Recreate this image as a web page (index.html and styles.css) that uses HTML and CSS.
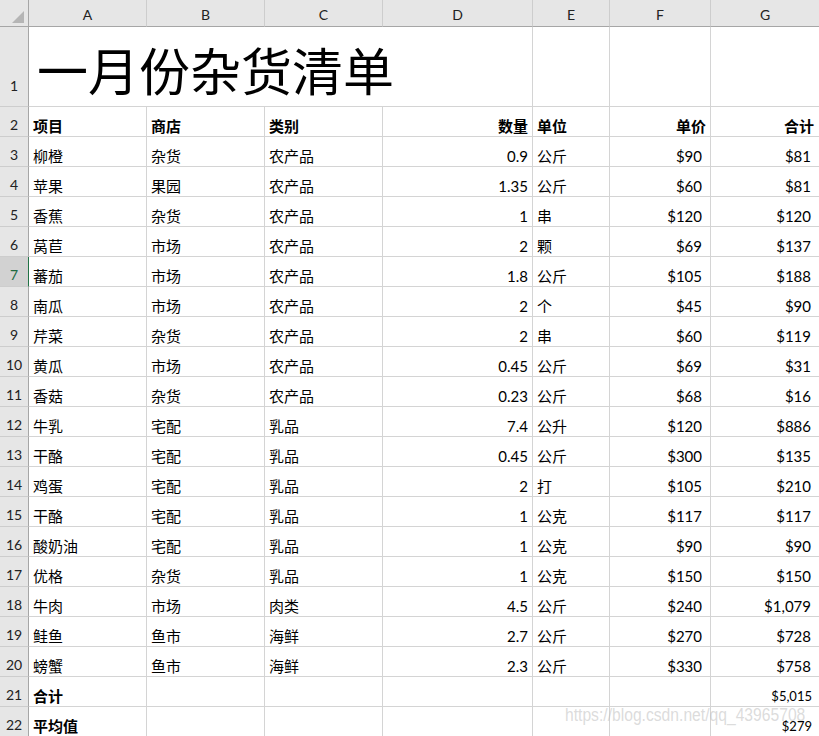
FILE: index.html
```html
<!DOCTYPE html>
<html lang="zh">
<head>
<meta charset="utf-8">
<title>一月份杂货清单</title>
<link rel="stylesheet" href="styles.css">
</head>
<body>
<div class="sheet">
  <div class="corner"><span class="tri"></span></div>
  <div class="colhead">A</div><div class="colhead">B</div><div class="colhead">C</div><div class="colhead">D</div><div class="colhead">E</div><div class="colhead">F</div><div class="colhead last">G</div>

  <div class="rowhead tall">1</div>
  <div class="c title">一月份杂货清单</div><div class="c"></div><div class="c"></div><div class="c last"></div>

  <div class="rowhead">2</div>
  <div class="c b">项目</div><div class="c b">商店</div><div class="c b">类别</div><div class="c b r">数量</div><div class="c b">单位</div><div class="c b r">单价</div><div class="c b r g last">合计</div>

  <div class="rowhead">3</div>
  <div class="c">柳橙</div><div class="c">杂货</div><div class="c">农产品</div><div class="c r">0.9</div><div class="c">公斤</div><div class="c r cur">$90</div><div class="c r cur last">$81</div>

  <div class="rowhead">4</div>
  <div class="c">苹果</div><div class="c">果园</div><div class="c">农产品</div><div class="c r">1.35</div><div class="c">公斤</div><div class="c r cur">$60</div><div class="c r cur last">$81</div>

  <div class="rowhead">5</div>
  <div class="c">香蕉</div><div class="c">杂货</div><div class="c">农产品</div><div class="c r">1</div><div class="c">串</div><div class="c r cur">$120</div><div class="c r cur last">$120</div>

  <div class="rowhead">6</div>
  <div class="c">莴苣</div><div class="c">市场</div><div class="c">农产品</div><div class="c r">2</div><div class="c">颗</div><div class="c r cur">$69</div><div class="c r cur last">$137</div>

  <div class="rowhead sel">7</div>
  <div class="c">蕃茄</div><div class="c">市场</div><div class="c">农产品</div><div class="c r">1.8</div><div class="c">公斤</div><div class="c r cur">$105</div><div class="c r cur last">$188</div>

  <div class="rowhead">8</div>
  <div class="c">南瓜</div><div class="c">市场</div><div class="c">农产品</div><div class="c r">2</div><div class="c">个</div><div class="c r cur">$45</div><div class="c r cur last">$90</div>

  <div class="rowhead">9</div>
  <div class="c">芹菜</div><div class="c">杂货</div><div class="c">农产品</div><div class="c r">2</div><div class="c">串</div><div class="c r cur">$60</div><div class="c r cur last">$119</div>

  <div class="rowhead">10</div>
  <div class="c">黄瓜</div><div class="c">市场</div><div class="c">农产品</div><div class="c r">0.45</div><div class="c">公斤</div><div class="c r cur">$69</div><div class="c r cur last">$31</div>

  <div class="rowhead">11</div>
  <div class="c">香菇</div><div class="c">杂货</div><div class="c">农产品</div><div class="c r">0.23</div><div class="c">公斤</div><div class="c r cur">$68</div><div class="c r cur last">$16</div>

  <div class="rowhead">12</div>
  <div class="c">牛乳</div><div class="c">宅配</div><div class="c">乳品</div><div class="c r">7.4</div><div class="c">公升</div><div class="c r cur">$120</div><div class="c r cur last">$886</div>

  <div class="rowhead">13</div>
  <div class="c">干酪</div><div class="c">宅配</div><div class="c">乳品</div><div class="c r">0.45</div><div class="c">公斤</div><div class="c r cur">$300</div><div class="c r cur last">$135</div>

  <div class="rowhead">14</div>
  <div class="c">鸡蛋</div><div class="c">宅配</div><div class="c">乳品</div><div class="c r">2</div><div class="c">打</div><div class="c r cur">$105</div><div class="c r cur last">$210</div>

  <div class="rowhead">15</div>
  <div class="c">干酪</div><div class="c">宅配</div><div class="c">乳品</div><div class="c r">1</div><div class="c">公克</div><div class="c r cur">$117</div><div class="c r cur last">$117</div>

  <div class="rowhead">16</div>
  <div class="c">酸奶油</div><div class="c">宅配</div><div class="c">乳品</div><div class="c r">1</div><div class="c">公克</div><div class="c r cur">$90</div><div class="c r cur last">$90</div>

  <div class="rowhead">17</div>
  <div class="c">优格</div><div class="c">杂货</div><div class="c">乳品</div><div class="c r">1</div><div class="c">公克</div><div class="c r cur">$150</div><div class="c r cur last">$150</div>

  <div class="rowhead">18</div>
  <div class="c">牛肉</div><div class="c">市场</div><div class="c">肉类</div><div class="c r">4.5</div><div class="c">公斤</div><div class="c r cur">$240</div><div class="c r cur last">$1,079</div>

  <div class="rowhead">19</div>
  <div class="c">鲑鱼</div><div class="c">鱼市</div><div class="c">海鲜</div><div class="c r">2.7</div><div class="c">公斤</div><div class="c r cur">$270</div><div class="c r cur last">$728</div>

  <div class="rowhead">20</div>
  <div class="c">螃蟹</div><div class="c">鱼市</div><div class="c">海鲜</div><div class="c r">2.3</div><div class="c">公斤</div><div class="c r cur">$330</div><div class="c r cur last">$758</div>

  <div class="rowhead">21</div>
  <div class="c b">合计</div><div class="c"></div><div class="c"></div><div class="c"></div><div class="c"></div><div class="c"></div><div class="c r sm last">$5,015</div>

  <div class="rowhead">22</div>
  <div class="c b">平均值</div><div class="c"></div><div class="c"></div><div class="c"></div><div class="c"></div><div class="c"></div><div class="c r sm last">$279</div>
</div>
<div class="watermark">https://blog.csdn.net/qq_43965708</div>
</body>
</html>
```

FILE: styles.css
```css
html, body {
  margin: 0;
  padding: 0;
  background: #ffffff;
  overflow: hidden;
}

body {
  width: 819px;
  height: 736px;
  position: relative;
  font-family: "Lato", "Noto Sans CJK SC", sans-serif;
  color: #000;
}

.sheet {
  display: grid;
  grid-template-columns: 29px 118px 118px 118px 150px 77px 101px 108px;
  grid-template-rows: 27px 80px repeat(21, 30px);
}

.corner {
  background: #e6e6e6;
  border-right: 1px solid #a6a6a6;
  border-bottom: 1px solid #a6a6a6;
  box-sizing: border-box;
  position: relative;
}

.tri {
  position: absolute;
  right: 4px;
  bottom: 3px;
  width: 0;
  height: 0;
  border-left: 12px solid transparent;
  border-bottom: 12px solid #b5b5b5;
}

.colhead {
  background: #e6e6e6;
  box-sizing: border-box;
  border-right: 1px solid #cdcdcd;
  border-bottom: 1px solid #a6a6a6;
  display: flex;
  align-items: center;
  justify-content: center;
  padding-top: 2px;
  font-size: 14px;
  color: #222;
}

.colhead.last {
  border-right: none;
}

.rowhead {
  background: #e6e6e6;
  box-sizing: border-box;
  border-right: 1px solid #a6a6a6;
  border-bottom: 1px solid #cdcdcd;
  display: flex;
  align-items: flex-end;
  justify-content: center;
  padding-bottom: 3px;
  font-size: 14px;
  line-height: 16px;
  color: #222;
}

.rowhead.tall {
  padding-bottom: 12px;
}

.rowhead.sel {
  background: #d2d2d2;
  color: #1e6b41;
  border-right: 1px solid #217346;
}

.c {
  box-sizing: border-box;
  border-right: 1px solid #d4d4d4;
  border-bottom: 1px solid #d4d4d4;
  display: flex;
  align-items: flex-end;
  padding: 0 4px 0 4px;
  font-size: 15px;
  line-height: 20px;
  white-space: nowrap;
}

.c.last {
  border-right: none;
}

.c.r {
  justify-content: flex-end;
}

.c.cur {
  padding-right: 8px;
}

.c.g {
  padding-right: 5px;
}

.c.b {
  font-weight: 700;
}

.c.sm {
  font-size: 13px;
  padding-right: 7px;
  padding-bottom: 0;
}

.c.title {
  grid-column: span 4;
  font-size: 51px;
  line-height: 60px;
  padding-left: 8px;
  padding-bottom: 4px;
}

.watermark {
  position: absolute;
  left: 565px;
  top: 705px;
  font-family: "Liberation Sans", Arial, sans-serif;
  font-size: 18px;
  color: rgba(190, 190, 190, 0.55);
  white-space: nowrap;
  transform: scaleX(0.87);
  transform-origin: left top;
  pointer-events: none;
}
```
